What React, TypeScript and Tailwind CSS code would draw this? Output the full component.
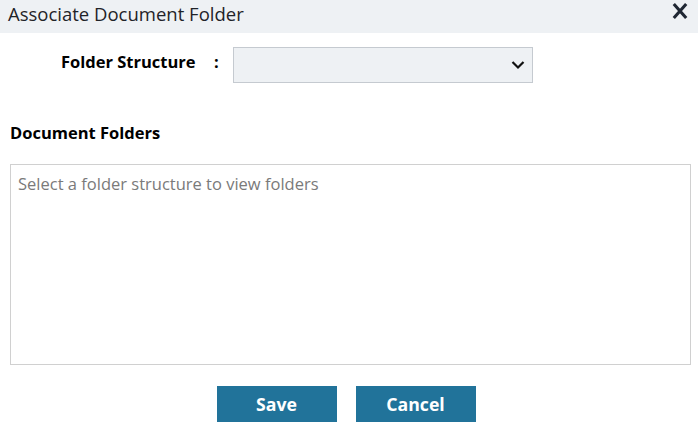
import React from "react";

export default function App() {
  return (
    <div className="w-[698px] h-[430px] bg-white overflow-hidden" style={{ fontFamily: '"Open Sans", sans-serif' }}>
      <div className="h-[33px] bg-[#eef1f4] flex items-start justify-between pl-[8px] pr-[10px]">
        <span className="text-[18.5px] text-[#1f2328] leading-[26px] mt-[1px]">Associate Document Folder</span>
        <svg width="16" height="18" viewBox="0 0 16 18" className="mt-[2px]">
          <path d="M1.8 2 L14.2 16 M14.2 2 L1.8 16" stroke="#1f2733" strokeWidth="3.1" strokeLinecap="butt" />
        </svg>
      </div>
      <div className="flex items-center mt-[14px] h-[36px]">
        <div className="ml-[61px] w-[153px] mb-[6px] text-[16.5px] font-bold text-black">Folder Structure</div>
        <div className="w-[19px] mb-[6px] text-[16.5px] font-bold text-black">:</div>
        <div className="w-[300px] h-[36px] bg-[#eef1f4] border border-[#c5cad0] flex items-center justify-end pr-[7px]">
          <svg width="14" height="10" viewBox="0 0 14 10">
            <path d="M1.5 2 L7 7.5 L12.5 2" fill="none" stroke="#111" strokeWidth="2.2" />
          </svg>
        </div>
      </div>
      <div className="ml-[10px] mt-[38px] text-[16.5px] font-bold text-black leading-[24px]">Document Folders</div>
      <div className="ml-[10px] mt-[19px] w-[681px] h-[201px] border border-[#d0d0d0] pl-[7px] pt-[7px]">
        <span className="text-[16.5px] text-[#7a7a7a] leading-[24px]">Select a folder structure to view folders</span>
      </div>
      <div className="flex justify-center gap-[19px] mt-[21px] pr-[6px]">
        <button className="w-[120px] h-[36px] bg-[#21739a] text-white text-[17.7px] font-bold">Save</button>
        <button className="w-[120px] h-[36px] bg-[#21739a] text-white text-[17.7px] font-bold">Cancel</button>
      </div>
    </div>
  );
}
